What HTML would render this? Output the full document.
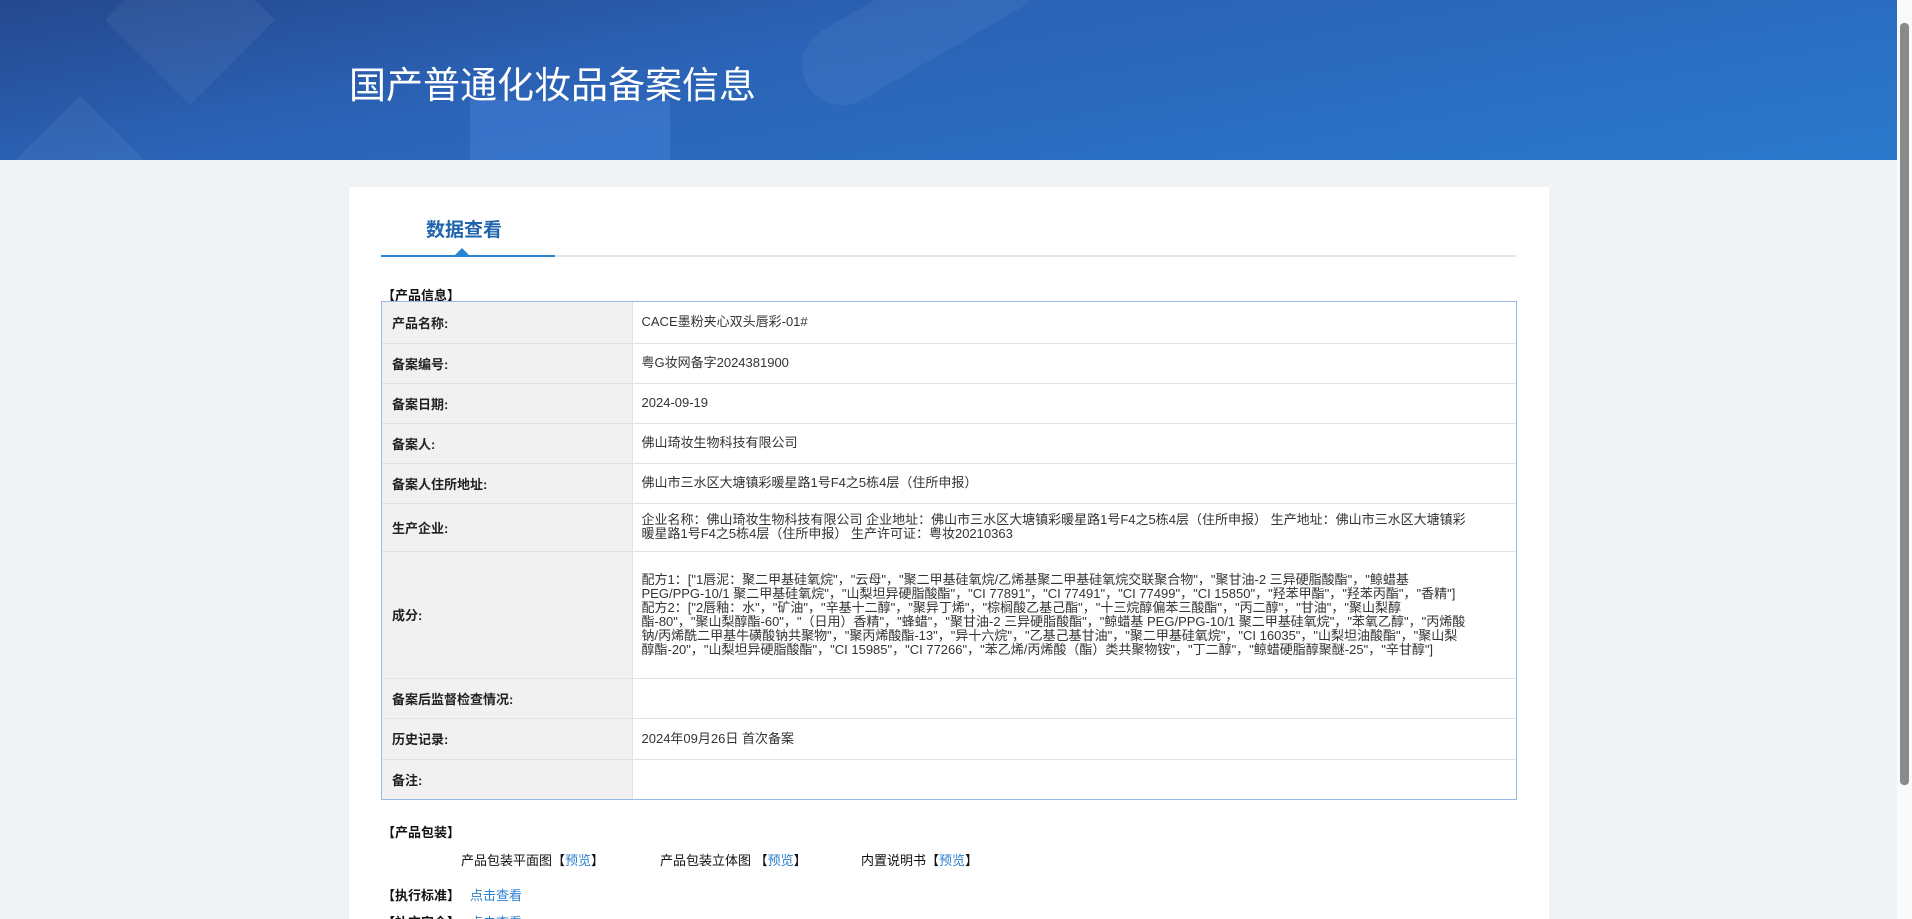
<!DOCTYPE html>
<html><head><meta charset="utf-8"><style>
*{margin:0;padding:0;box-sizing:border-box}
html,body{width:1912px;height:919px;overflow:hidden}
body{background:#eff3f6;font-family:"Liberation Sans","Noto Sans CJK SC",sans-serif;color:#333;font-size:13px;position:relative}
.hdr{position:absolute;left:0;top:0;width:1897px;height:160px;background:linear-gradient(170deg,#24488e 0%,#2b62b5 35%,#2a78cc 100%);overflow:hidden}
.hdr .s{position:absolute;background:rgba(255,255,255,.05)}
.title{position:absolute;left:349px;top:64px;color:#fff;font-size:37px;letter-spacing:0;line-height:44px;white-space:nowrap}
.panel{position:absolute;left:349px;top:187px;width:1200px;height:760px;background:#fff}
.tab{position:absolute;left:426px;top:215px;font-size:19px;font-weight:bold;color:#1f64ad}
.tline{position:absolute;left:382px;top:255px;width:1134px;height:2px;background:#e5e5e5}
.tblue{position:absolute;left:381px;top:255px;width:174px;height:2px;background:#2a84d6}
.tri{position:absolute;left:455px;top:248px;width:0;height:0;border-left:7px solid transparent;border-right:7px solid transparent;border-bottom:7px solid #2a84d6}
.sec{position:absolute;font-weight:bold;font-size:13px;color:#111}
.tw{position:absolute;left:381px;top:301px;width:1136px;border:1px solid #98b9e4}
table{width:100%;border-collapse:collapse;border-style:hidden}
td{border:1px solid #e2e2e2;vertical-align:middle;font-size:13px;color:#333}
td.l{width:250px;background:#f1f1f1;font-weight:bold;padding-left:10px;color:#222}
td.v{padding-left:9px;padding-right:50px;line-height:14px}
a{color:#2a7fd0;text-decoration:none}
.sb{position:absolute;left:1897px;top:0;width:15px;height:919px;background:#fafafa}
.thumb{position:absolute;left:1900px;top:23px;width:9px;height:762px;background:#8a8a8a;border-radius:4px}
</style></head><body>
<div class="hdr">
<div class="s" style="left:130px;top:-40px;width:120px;height:120px;transform:rotate(45deg)"></div>
<div class="s" style="left:470px;top:100px;width:200px;height:120px;background:rgba(80,140,230,.35)"></div>
<div class="s" style="left:790px;top:-20px;width:260px;height:80px;border-radius:40px;transform:rotate(-30deg)"></div>
<div class="s" style="left:20px;top:120px;width:120px;height:120px;transform:rotate(45deg)"></div>
<div class="title">国产普通化妆品备案信息</div>
</div>
<div class="panel"></div>
<div class="tab">数据查看</div>
<div class="tline"></div><div class="tblue"></div><div class="tri"></div>
<div class="sec" style="left:382px;top:285px">【产品信息】</div>
<div class="tw"><table>
<tr style="height:41px"><td class="l">产品名称:</td><td class="v">CACE墨粉夹心双头唇彩-01#</td></tr>
<tr style="height:40px"><td class="l">备案编号:</td><td class="v">粤G妆网备字2024381900</td></tr>
<tr style="height:40px"><td class="l">备案日期:</td><td class="v">2024-09-19</td></tr>
<tr style="height:40px"><td class="l">备案人:</td><td class="v">佛山琦妆生物科技有限公司</td></tr>
<tr style="height:40px"><td class="l">备案人住所地址:</td><td class="v">佛山市三水区大塘镇彩暖星路1号F4之5栋4层（住所申报）</td></tr>
<tr style="height:48px"><td class="l">生产企业:</td><td class="v">企业名称：佛山琦妆生物科技有限公司 企业地址：佛山市三水区大塘镇彩暖星路1号F4之5栋4层（住所申报） 生产地址：佛山市三水区大塘镇彩暖星路1号F4之5栋4层（住所申报） 生产许可证：粤妆20210363</td></tr>
<tr style="height:127px"><td class="l">成分:</td><td class="v">配方1：["1唇泥：聚二甲基硅氧烷"，"云母"，"聚二甲基硅氧烷/乙烯基聚二甲基硅氧烷交联聚合物"，"聚甘油-2 三异硬脂酸酯"，"鲸蜡基PEG/PPG-10/1 聚二甲基硅氧烷"，"山梨坦异硬脂酸酯"，"CI 77891"，"CI 77491"，"CI 77499"，"CI 15850"，"羟苯甲酯"，"羟苯丙酯"，"香精"]<br>配方2：["2唇釉：水"，"矿油"，"辛基十二醇"，"聚异丁烯"，"棕榈酸乙基己酯"，"十三烷醇偏苯三酸酯"，"丙二醇"，"甘油"，"聚山梨醇酯-80"，"聚山梨醇酯-60"，"（日用）香精"，"蜂蜡"，"聚甘油-2 三异硬脂酸酯"，"鲸蜡基 PEG/PPG-10/1 聚二甲基硅氧烷"，"苯氧乙醇"，"丙烯酸钠/丙烯酰二甲基牛磺酸钠共聚物"，"聚丙烯酸酯-13"，"异十六烷"，"乙基己基甘油"，"聚二甲基硅氧烷"，"CI 16035"，"山梨坦油酸酯"，"聚山梨醇酯-20"，"山梨坦异硬脂酸酯"，"CI 15985"，"CI 77266"，"苯乙烯/丙烯酸（酯）类共聚物铵"，"丁二醇"，"鲸蜡硬脂醇聚醚-25"，"辛甘醇"]</td></tr>
<tr style="height:40px"><td class="l">备案后监督检查情况:</td><td class="v"></td></tr>
<tr style="height:41px"><td class="l">历史记录:</td><td class="v">2024年09月26日 首次备案</td></tr>
<tr style="height:40px"><td class="l">备注:</td><td class="v"></td></tr>
</table></div>
<div class="sec" style="left:382px;top:822px">【产品包装】</div>
<div style="position:absolute;left:461px;top:850px;color:#111">产品包装平面图【<a>预览</a>】</div>
<div style="position:absolute;left:660px;top:850px;color:#111">产品包装立体图 【<a>预览</a>】</div>
<div style="position:absolute;left:861px;top:850px;color:#111">内置说明书【<a>预览</a>】</div>
<div class="sec" style="left:382px;top:885px">【执行标准】</div>
<div style="position:absolute;left:470px;top:885px"><a>点击查看</a></div>
<div class="sec" style="left:382px;top:912px">【补充安全】</div>
<div style="position:absolute;left:470px;top:912px"><a>点击查看</a></div>
<div class="sb"></div><div class="thumb"></div>
</body></html>
